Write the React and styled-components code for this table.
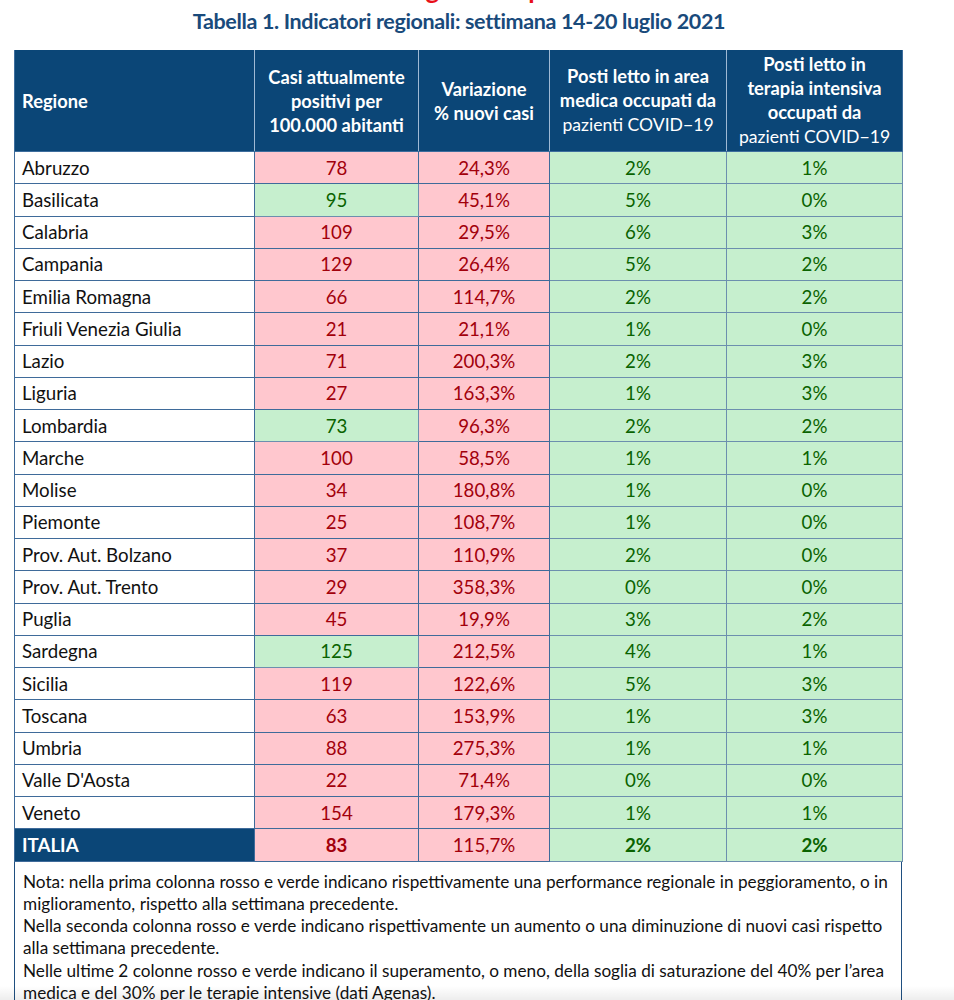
import styled, { createGlobalStyle } from "styled-components";

const Global = createGlobalStyle`
  html, body { margin: 0; padding: 0; background: #fff; }
  body { font-family: Lato, "Open Sans", sans-serif; color: #111; }
`;

const Page = styled.div`
  width: 954px;
  height: 1000px;
  overflow: hidden;
  position: relative;
`;

const Cut = styled.div`
  height: 4px;
  overflow: hidden;
  display: flex;
  justify-content: center;
  align-items: flex-end;
`;
const RedHead = styled.div`
  color: #e8101a;
  font-weight: 700;
  font-size: 26px;
  line-height: 30px;
  padding-left: 40px;
`;

const Title = styled.h1`
  margin: 4px 0 0;
  text-align: center;
  font-size: 21.5px;
  line-height: 26px;
  font-weight: 700;
  color: #194a7b;
  letter-spacing: -0.35px;
  padding-right: 36px;
`;

const Wrap = styled.div`
  margin: 16px 0 0 14px;
  width: 888px;
`;

const Table = styled.table`
  border-collapse: collapse;
  width: 888px;
  table-layout: fixed;
  font-size: 18.7px;
`;

const Th = styled.th`
  background: #0b4677;
  color: #fff;
  font-weight: 700;
  font-size: 18.3px;
  line-height: 24px;
  height: 101px;
  padding: 0 2px;
  text-align: ${(p) => (p.$left ? "left" : "center")};
  border: 1px solid #9fb9d4;
  border-top: none;
  border-bottom-color: #3d6d9d;
  vertical-align: middle;
  white-space: nowrap;
  ${(p) => p.$left && "padding-left: 7px; border-left-color: #3d6d9d;"}
  &:last-child { border-right-color: #3d6d9d; }
`;

const Light = styled.span`
  font-weight: 400;
  font-size: 17.6px;
`;

const Tr = styled.tr`
  height: 32.25px;
`;

const Name = styled.td`
  padding: 0 7px;
  border: 1px solid #3f6b9a;
  background: #fff;
  color: #111;
  white-space: nowrap;
`;

const TotName = styled(Name)`
  background: #0b4677;
  color: #fff;
  font-weight: 700;
`;

const Cell = styled.td`
  text-align: center;
  padding: 0;
  border: 1px solid ${(p) => (p.$tone === "g" ? "#6c8fae" : "#3f6b9a")};
  background: ${(p) => (p.$tone === "g" ? "#c6efce" : "#ffc7ce")};
  color: ${(p) => (p.$tone === "g" ? "#0a6300" : "#a2000b")};
  font-weight: ${(p) => (p.$bold ? 700 : 400)};
`;

const Note = styled.div`
  border: 1.5px solid #1f4f80;
  border-top: none;
  padding: 9px 7px 10px 8px;
  font-size: 17.2px;
  line-height: 22.3px;
  color: #111;
  white-space: nowrap;
`;

const Fade = styled.div`
  position: absolute;
  left: 0;
  right: 0;
  bottom: 0;
  height: 14px;
  background: linear-gradient(to bottom, rgba(0,0,0,0), rgba(0,0,0,0.07));
  pointer-events: none;
`;

const rows = [
  ["Abruzzo", "78", "r", "24,3%", "2%", "1%"],
  ["Basilicata", "95", "g", "45,1%", "5%", "0%"],
  ["Calabria", "109", "r", "29,5%", "6%", "3%"],
  ["Campania", "129", "r", "26,4%", "5%", "2%"],
  ["Emilia Romagna", "66", "r", "114,7%", "2%", "2%"],
  ["Friuli Venezia Giulia", "21", "r", "21,1%", "1%", "0%"],
  ["Lazio", "71", "r", "200,3%", "2%", "3%"],
  ["Liguria", "27", "r", "163,3%", "1%", "3%"],
  ["Lombardia", "73", "g", "96,3%", "2%", "2%"],
  ["Marche", "100", "r", "58,5%", "1%", "1%"],
  ["Molise", "34", "r", "180,8%", "1%", "0%"],
  ["Piemonte", "25", "r", "108,7%", "1%", "0%"],
  ["Prov. Aut. Bolzano", "37", "r", "110,9%", "2%", "0%"],
  ["Prov. Aut. Trento", "29", "r", "358,3%", "0%", "0%"],
  ["Puglia", "45", "r", "19,9%", "3%", "2%"],
  ["Sardegna", "125", "g", "212,5%", "4%", "1%"],
  ["Sicilia", "119", "r", "122,6%", "5%", "3%"],
  ["Toscana", "63", "r", "153,9%", "1%", "3%"],
  ["Umbria", "88", "r", "275,3%", "1%", "1%"],
  ["Valle D'Aosta", "22", "r", "71,4%", "0%", "0%"],
  ["Veneto", "154", "r", "179,3%", "1%", "1%"],
];

export default function App() {
  return (
    <Page>
      <Global />
      <Cut>
        <RedHead>Dati regionali e provinciali</RedHead>
      </Cut>
      <Title>Tabella 1. Indicatori regionali: settimana 14-20 luglio 2021</Title>
      <Wrap>
        <Table>
          <colgroup>
            <col style={{ width: 240 }} />
            <col style={{ width: 164 }} />
            <col style={{ width: 131 }} />
            <col style={{ width: 177 }} />
            <col style={{ width: 176 }} />
          </colgroup>
          <thead>
            <tr>
              <Th $left>Regione</Th>
              <Th>
                Casi attualmente<br />positivi per<br />100.000 abitanti
              </Th>
              <Th>
                Variazione<br />% nuovi casi
              </Th>
              <Th>
                Posti letto in area<br />medica occupati da<br />
                <Light>pazienti COVID−19</Light>
              </Th>
              <Th>
                Posti letto in<br />terapia intensiva<br />occupati da<br />
                <Light>pazienti COVID−19</Light>
              </Th>
            </tr>
          </thead>
          <tbody>
            {rows.map(([name, casi, tone, varia, med, ti]) => (
              <Tr key={name}>
                <Name>{name}</Name>
                <Cell $tone={tone}>{casi}</Cell>
                <Cell $tone="r">{varia}</Cell>
                <Cell $tone="g">{med}</Cell>
                <Cell $tone="g">{ti}</Cell>
              </Tr>
            ))}
            <Tr>
              <TotName>ITALIA</TotName>
              <Cell $tone="r" $bold>83</Cell>
              <Cell $tone="r">115,7%</Cell>
              <Cell $tone="g" $bold>2%</Cell>
              <Cell $tone="g" $bold>2%</Cell>
            </Tr>
          </tbody>
        </Table>
        <Note>
          Nota: nella prima colonna rosso e verde indicano rispettivamente una performance regionale in peggioramento, o in
          <br />
          miglioramento, rispetto alla settimana precedente.
          <br />
          Nella seconda colonna rosso e verde indicano rispettivamente un aumento o una diminuzione di nuovi casi rispetto
          <br />
          alla settimana precedente.
          <br />
          Nelle ultime 2 colonne rosso e verde indicano il superamento, o meno, della soglia di saturazione del 40% per l’area
          <br />
          medica e del 30% per le terapie intensive (dati Agenas).
        </Note>
      </Wrap>
      <Fade />
    </Page>
  );
}
